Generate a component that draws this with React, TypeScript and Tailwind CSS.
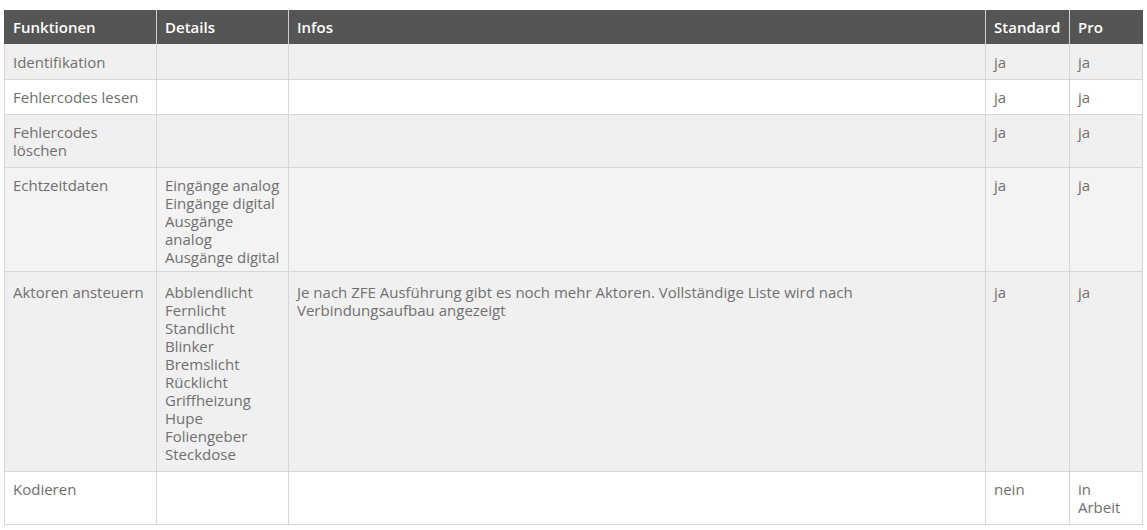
const cols = 'grid grid-cols-[152px_132px_697px_84px_73px]'

interface Row {
  name: string
  details: string[]
  info: string
  standard: string
  pro: string
  height: string
  bg: string
  pad: string
}

const rows: Row[] = [
  { name: 'Identifikation', details: [], info: '', standard: 'ja', pro: 'ja', height: 'h-[36px]', bg: 'bg-[#f0f0f0]', pad: 'pt-[9px]' },
  { name: 'Fehlercodes lesen', details: [], info: '', standard: 'ja', pro: 'ja', height: 'h-[35px]', bg: 'bg-white', pad: 'pt-2' },
  { name: 'Fehlercodes löschen', details: [], info: '', standard: 'ja', pro: 'ja', height: 'h-[53px]', bg: 'bg-[#f0f0f0]', pad: 'pt-2' },
  {
    name: 'Echtzeitdaten',
    details: ['Eingänge analog', 'Eingänge digital', 'Ausgänge analog', 'Ausgänge digital'],
    info: '',
    standard: 'ja',
    pro: 'ja',
    height: 'h-[104px]',
    bg: 'bg-[#f3f3f3]',
    pad: 'pt-2',
  },
  {
    name: 'Aktoren ansteuern',
    details: [
      'Abblendlicht',
      'Fernlicht',
      'Standlicht',
      'Blinker',
      'Bremslicht',
      'Rücklicht',
      'Griffheizung',
      'Hupe',
      'Foliengeber',
      'Steckdose',
    ],
    info: 'Je nach ZFE Ausführung gibt es noch mehr Aktoren. Vollständige Liste wird nach Verbindungsaufbau angezeigt',
    standard: 'ja',
    pro: 'ja',
    height: 'h-[200px]',
    bg: 'bg-[#f0f0f0]',
    pad: 'pt-[11px]',
  },
  { name: 'Kodieren', details: [], info: '', standard: 'nein', pro: 'in Arbeit', height: 'h-[53px]', bg: 'bg-white', pad: 'pt-2' },
]

const cell = 'border-r border-[#d6d6d6] px-2 break-words'

export default function App() {
  return (
    <div className="bg-white pt-[10px] pl-[4px] h-[530px] font-['Open_Sans',sans-serif] text-[15px] leading-[18px]">
      <div className="w-[1139px]">
        {/* Header */}
        <div className={`${cols} h-[34px] bg-[#555555] border-l border-[#555555] font-semibold text-white`}>
          {['Funktionen', 'Details', 'Infos', 'Standard', 'Pro'].map((h, i) => (
            <div
              key={h}
              className={`flex items-center px-2 ${i < 4 ? 'border-r border-[#cfcfcf]' : ''}`}
            >
              {h}
            </div>
          ))}
        </div>

        {rows.map((r) => (
          <div
            key={r.name}
            className={`${cols} ${r.height} ${r.bg} border-l border-b border-[#d6d6d6] text-[#707070]`}
          >
            <div className={`${cell} ${r.pad}`}>{r.name}</div>
            <div className={`${cell} ${r.pad}`}>
              {r.details.map((d) => (
                <div key={d}>{d}</div>
              ))}
            </div>
            <div className={`${cell} ${r.pad}`}>{r.info}</div>
            <div className={`${cell} ${r.pad}`}>{r.standard}</div>
            <div className={`${cell} ${r.pad}`}>{r.pro}</div>
          </div>
        ))}
      </div>
    </div>
  )
}
